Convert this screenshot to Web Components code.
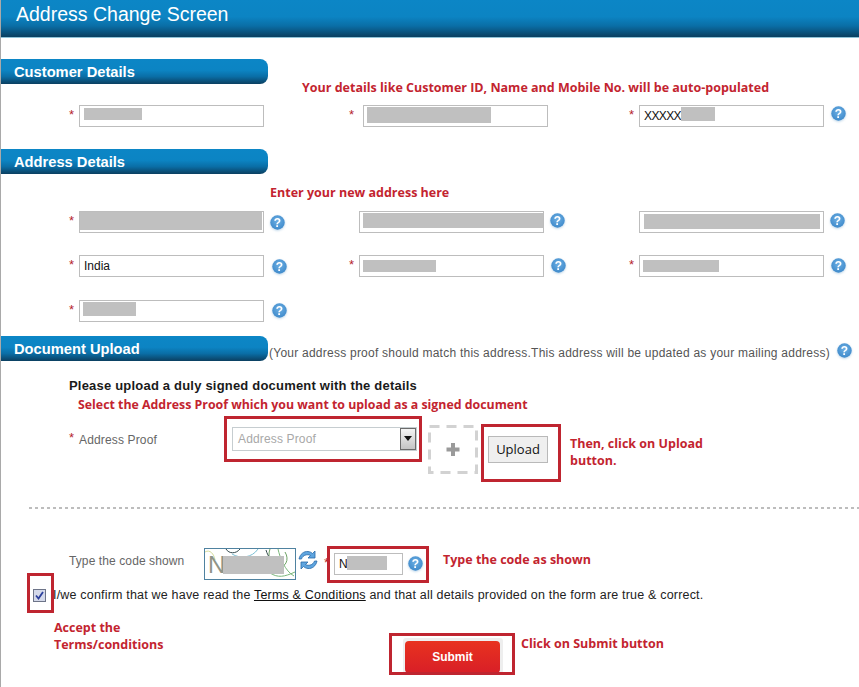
<!DOCTYPE html>
<html lang="en">
<head>
<meta charset="utf-8">
<title>Address Change Screen</title>
<style>
    html, body { margin: 0; padding: 0; background: #fff; }
    body { font-family: "Liberation Sans", Arial, sans-serif; }
</style>
</head>
<body>
<address-page></address-page>

<script>
(function () {
    const BAR = "linear-gradient(to bottom, #0c86c6 0%, #0c84c3 45%, #0a6ea6 70%, #0b3f60 100%)";

    class BaseElement extends HTMLElement {
        constructor() {
            super();
            this.attachShadow({ mode: "open" });
        }

        connectedCallback() {
            this.shadowRoot.innerHTML = this.render();
        }
    }

    class TitleBar extends BaseElement {
        render() {
            return `
                <style>
                    :host {
                        display: flex;
                        align-items: center;
                        height: 28px;
                        padding: 0 0 9px 15px;
                        background: ${BAR};
                        border-bottom: 1px solid #8fc3d8;
                        color: #fff;
                        font-size: 19.5px;
                    }
                </style>
                <slot></slot>
            `;
        }
    }

    class SectionHead extends BaseElement {
        render() {
            return `
                <style>
                    :host {
                        display: flex;
                        align-items: center;
                        width: 254px;
                        height: 25px;
                        padding-left: 13px;
                        background: ${BAR};
                        border-radius: 0 8px 8px 0;
                        color: #fff;
                        font-size: 14.7px;
                        font-weight: bold;
                        flex: none;
                    }
                </style>
                <slot></slot>
            `;
        }
    }

    class HelpIcon extends BaseElement {
        render() {
            return `
                <style>
                    :host { display: inline-block; width: 15px; height: 15px; flex: none; }
                    svg { display: block; overflow: visible; filter: drop-shadow(0 1px 1px rgba(120, 170, 210, .5)); }
                    text { font: bold 12px "Liberation Sans", Arial, sans-serif; fill: #fff; }
                </style>
                <svg width="15" height="15" viewBox="0 0 15 15">
                    <defs>
                        <radialGradient id="g" cx="50%" cy="40%" r="60%">
                            <stop offset="0" stop-color="#6db0e4"/>
                            <stop offset="1" stop-color="#3f8acb"/>
                        </radialGradient>
                    </defs>
                    <circle cx="7.5" cy="7.5" r="7.2" fill="url(#g)"/>
                    <text x="7.5" y="11.8" text-anchor="middle">?</text>
                </svg>
            `;
        }
    }

    class RedNote extends BaseElement {
        render() {
            return `
                <style>
                    :host {
                        display: block;
                        color: #c3242f;
                        font-family: "Open Sans", sans-serif;
                        font-size: 12.5px;
                        font-weight: 700;
                        line-height: 17.5px;
                    }
                </style>
                <slot></slot>
            `;
        }
    }

    class TextField extends BaseElement {
        render() {
            const width = this.getAttribute("width") || "185";
            const value = this.getAttribute("value") || "";
            const maskX = this.getAttribute("mask-x") || "4";
            const maskW = this.getAttribute("mask-w") || "0";
            const maskY = this.getAttribute("mask-y") || "3";
            const maskH = this.getAttribute("mask-h") || "14";
            const gap = this.getAttribute("help-gap");
            const dy = this.getAttribute("help-dy") || "0";
            const starW = this.getAttribute("star-w") || "10";
            const spacing = this.getAttribute("spacing") || "0";
            const star = this.hasAttribute("no-star") ? "" : "*";
            return `
                <style>
                    :host { display: flex; align-items: flex-start; font-size: 12px; }
                    .star { width: ${starW}px; flex: none; color: #b5242c; font-size: 13px; line-height: 20px; }
                    .box {
                        position: relative;
                        box-sizing: border-box;
                        width: ${width}px;
                        height: 22px;
                        border: 1px solid #bdbdbd;
                        background: #fff;
                        padding-left: 4px;
                        line-height: 20px;
                        letter-spacing: ${spacing}px;
                        color: #111;
                        overflow: hidden;
                    }
                    .mask {
                        position: absolute;
                        left: ${maskX}px;
                        top: ${maskY}px;
                        width: ${maskW}px;
                        height: ${maskH}px;
                        background: #c0c0c0;
                    }
                    help-icon { margin-left: ${gap}px; margin-top: ${dy}px; }
                </style>
                <span class="star">${star}</span>
                <div class="box">${value}<span class="mask"></span></div>
                ${gap !== null ? "<help-icon></help-icon>" : ""}
            `;
        }
    }

    class FieldRow extends BaseElement {
        render() {
            return `
                <style>
                    :host {
                        display: grid;
                        grid-template-columns: 280px 280px auto;
                        padding-left: 68px;
                    }
                </style>
                <slot></slot>
            `;
        }
    }

    // red rectangles the screenshot's author drew round the controls
    class MarkBox extends BaseElement {
        render() {
            return `
                <style>
                    :host {
                        position: absolute;
                        box-sizing: border-box;
                        border: 3px solid #bf2530;
                        pointer-events: none;
                    }
                </style>
            `;
        }
    }

    class SelectBox extends BaseElement {
        render() {
            return `
                <style>
                    :host {
                        display: flex;
                        box-sizing: border-box;
                        width: 185px;
                        height: 24px;
                        border: 1px solid #c6cdd0;
                        color: #a8a8a8;
                        font-size: 12px;
                        letter-spacing: .15px;
                        line-height: 22px;
                        padding-left: 5px;
                        justify-content: space-between;
                    }
                    .arrow {
                        box-sizing: border-box;
                        width: 16px;
                        height: 22px;
                        background: linear-gradient(#f4f4f4, #c4c4c4);
                        border: 1px solid #6b6b6b;
                        display: flex;
                        align-items: center;
                        justify-content: center;
                    }
                    .arrow::before {
                        content: "";
                        border: 4px solid transparent;
                        border-top: 5px solid #111;
                        border-bottom: 0;
                    }
                </style>
                <slot></slot>
                <span class="arrow"></span>
            `;
        }
    }

    class AddBox extends BaseElement {
        render() {
            return `
                <style>
                    :host { display: block; width: 50px; height: 49px; flex: none; }
                    svg { display: block; }
                </style>
                <svg width="50" height="49" viewBox="0 0 50 49">
                    <rect x="1.5" y="1.5" width="47" height="46" fill="none" stroke="#d2d2d2" stroke-width="3" stroke-dasharray="10 7"/>
                    <path d="M25 18v13M18.500 24.500h13" stroke="#9a9a9a" stroke-width="4" fill="none"/>
                </svg>
            `;
        }
    }

    class UploadButton extends BaseElement {
        render() {
            return `
                <style>
                    :host {
                        display: flex;
                        align-items: center;
                        justify-content: center;
                        box-sizing: border-box;
                        width: 60px;
                        height: 27px;
                        background: #efefef;
                        border: 1px solid #b9b9b9;
                        color: #111;
                        font-family: "Open Sans", sans-serif;
                        font-size: 13px;
                    }
                </style>
                <slot></slot>
            `;
        }
    }

    class CaptchaImage extends BaseElement {
        render() {
            return `
                <style>
                    :host { display: block; width: 92px; height: 32px; flex: none; }
                    svg { display: block; }
                    text { font: 24px "Liberation Sans", Arial, sans-serif; fill: #8f9488; }
                </style>
                <svg width="92" height="32" viewBox="0 0 92 32">
                    <rect x=".5" y=".5" width="91" height="31" fill="#fff" stroke="#4f82a0"/>
                    <path d="M1 4c5-3 9 2 10 8" fill="none" stroke="#d6dc9a"/>
                    <path d="M22 1c3 5 10 5 14 0" fill="none" stroke="#354a4e"/>
                    <path d="M28 6c8 5 20 4 26-5" fill="none" stroke="#7cc0d4"/>
                    <path d="M66 1c-3 8 1 17 8 18s12-7 7-15" fill="none" stroke="#6fa366"/>
                    <path d="M62 2c2 7 6 12 12 15" fill="none" stroke="#354a4e"/>
                    <path d="M74 1c2 9 7 22 16 27" fill="none" stroke="#7ab77a"/>
                    <path d="M66 25c8 5 14 4 25-1" fill="none" stroke="#7ab77a"/>
                    <text x="4" y="25">N</text>
                    <rect x="19" y="8" width="61" height="18" fill="#c0c0c0"/>
                </svg>
            `;
        }
    }

    class RefreshIcon extends BaseElement {
        render() {
            return `
                <style>
                    :host { display: block; width: 20px; height: 20px; flex: none; }
                    svg { display: block; }
                </style>
                <svg width="20" height="20" viewBox="0 0 20 20">
                    <path d="M1 9C2 4 6 1 10 1.500c2 .2 3.500 1 4.500 2L17 1v7h-7l2.500-2.500C11 4.300 7 4.300 5 6.500 4 7.500 3.800 8.300 3.500 9Z" fill="#5fa5df" stroke="#2a6aa8" stroke-width=".8"/>
                    <path d="M19 11c-1 5-5 8-9 7.500-2-.2-3.500-1-4.500-2L3 19v-7h7l-2.500 2.500c1.500 1.200 5.500 1.200 7.500-1 1-1 1.200-1.800 1.500-2.500Z" fill="#5fa5df" stroke="#2a6aa8" stroke-width=".8"/>
                </svg>
            `;
        }
    }

    class TickBox extends BaseElement {
        render() {
            return `
                <style>
                    :host { display: block; width: 13px; height: 13px; flex: none; }
                    svg { display: block; }
                </style>
                <svg width="13" height="13" viewBox="0 0 13 13">
                    <rect x=".5" y=".5" width="12" height="12" fill="#d4d9ea" stroke="#6d7488"/>
                    <path d="M3 6.500l2.500 3L10 3" fill="none" stroke="#2b3f9c" stroke-width="1.800"/>
                </svg>
            `;
        }
    }

    class SubmitButton extends BaseElement {
        render() {
            return `
                <style>
                    :host {
                        display: block;
                        width: 100px;
                        height: 36px;
                        box-sizing: border-box;
                        padding: 3px 3px 1px 2px;
                        background: #eeeeee;
                        border-radius: 3px;
                    }
                    div {
                        display: flex;
                        align-items: center;
                        justify-content: center;
                        height: 32px;
                        border-radius: 4px;
                        background: linear-gradient(#e8321f, #d81f27);
                        color: #fff;
                        font-size: 12px;
                        font-weight: bold;
                    }
                </style>
                <div><slot></slot></div>
            `;
        }
    }

    class AddressPage extends BaseElement {
        render() {
            return `
                <style>
                    :host {
                        display: block;
                        position: relative;
                        box-sizing: border-box;
                        width: 859px;
                        height: 687px;
                        overflow: hidden;
                        border-left: 1px solid #a9a9a9;
                        color: #111;
                        font-family: "Liberation Sans", Arial, sans-serif;
                    }
                    section-head { margin-top: 21px; }
                    .address-head { margin-top: 22px; }
                    .hint { margin-left: 301px; margin-top: -5px; height: 14px; }
                    .row-customer { margin-top: 12px; }
                    .hint-address { margin: 10px 0 0 269px; height: 18px; }
                    .row-a { margin-top: 9px; }
                    .row-b { margin-top: 22px; }
                    .row-c { margin-top: 23px; }
                    .doc-head { display: flex; align-items: flex-end; margin-top: 14px; }
                    .doc-head section-head { margin-top: 0; }
                    .doc-note {
                        color: #555;
                        font-size: 12px;
                        margin-left: 1px;
                        margin-bottom: 1px;
                        letter-spacing: .24px;
                        white-space: nowrap;
                    }
                    .doc-head help-icon { margin: 0 0 3px 7px; }
                    .doc-title {
                        margin: 17px 0 0 68px;
                        font-size: 13px;
                        letter-spacing: .2px;
                        font-weight: bold;
                        line-height: 15px;
                        color: #1a1a1a;
                    }
                    .doc-hint { margin: 3px 0 0 77px; font-size: 12.35px; }
                    .upload-row { display: flex; align-items: flex-start; margin: 6px 0 0 68px; }
                    .star { width: 10px; color: #b5242c; font-size: 13px; line-height: 20px; flex: none; margin-top: 8px; }
                    .upload-label { width: 153px; color: #666; font-size: 12px; letter-spacing: .15px; line-height: 26px; margin-top: 7px; flex: none; }
                    .upload-row select-box { margin-top: 7px; }
                    .upload-row add-box { margin: 5px 0 0 11px; }
                    .upload-row upload-button { margin: 16px 0 0 10px; }
                    .upload-row red-note { margin: 15px 0 0 22px; }
                    .rule {
                        height: 2px;
                        margin: 33px 0 0 28px;
                        background: repeating-linear-gradient(to right, #bdbdbd 0 3px, #fff 3px 6px);
                    }
                    .code-row { display: flex; align-items: flex-start; margin: 39px 0 0 68px; }
                    .code-label { width: 135px; color: #666; font-size: 12px; line-height: 26px; flex: none; letter-spacing: .1px; }
                    .code-row refresh-icon { margin: 2px 0 0 2px; }
                    .code-row text-field { margin: 5px 0 0 6px; }
                    .code-row red-note { margin: 3px 0 0 20px; }
                    .confirm { display: flex; align-items: center; margin: 8px 0 0 32px; height: 15px; font-size: 12.5px; letter-spacing: .19px; color: #222; white-space: nowrap; }
                    .confirm span { margin-left: 7px; }
                    .confirm u { color: #111; }
                    .accept { margin: 16px 0 0 53px; }
                    .submit-row { display: flex; align-items: flex-start; margin: -16px 0 0 402px; }
                    .submit-row red-note { margin: -3px 0 0 18px; }
                    .m-select { left: 223px; top: 416px; width: 198px; height: 46px; }
                    .m-upload { left: 480px; top: 424px; width: 80px; height: 58px; }
                    .m-code { left: 326px; top: 546px; width: 102px; height: 37px; }
                    .m-tick { left: 26px; top: 573px; width: 27px; height: 40px; }
                    .m-submit { left: 388px; top: 633px; width: 126px; height: 42px; }
                </style>
                <title-bar>Address Change Screen</title-bar>

                <section-head>Customer Details</section-head>
                <red-note class="hint">Your details like Customer ID, Name and Mobile No. will be auto-populated</red-note>
                <field-row class="row-customer">
                    <text-field mask-x="4" mask-y="2" mask-w="58" mask-h="12"></text-field>
                    <text-field star-w="14" mask-x="3" mask-y="1" mask-w="124" mask-h="16"></text-field>
                    <text-field value="XXXXX" spacing="-.6" mask-x="41" mask-y="1" mask-w="34" help-gap="7" help-dy="1"></text-field>
                </field-row>

                <section-head class="address-head">Address Details</section-head>
                <red-note class="hint-address">Enter your new address here</red-note>
                <field-row class="row-a">
                    <text-field mask-x="0" mask-y="0" mask-w="182" mask-h="18" help-gap="6" help-dy="4"></text-field>
                    <text-field no-star mask-x="3" mask-y="1" mask-w="180" mask-h="15" help-gap="6" help-dy="2"></text-field>
                    <text-field no-star mask-x="4" mask-y="2" mask-w="176" mask-h="15" help-gap="6" help-dy="2"></text-field>
                </field-row>
                <field-row class="row-b">
                    <text-field value="India" help-gap="8" help-dy="4"></text-field>
                    <text-field mask-x="3" mask-y="4" mask-h="12" mask-w="73" help-gap="7" help-dy="3"></text-field>
                    <text-field mask-x="3" mask-y="4" mask-h="12" mask-w="76" help-gap="7" help-dy="3"></text-field>
                </field-row>
                <field-row class="row-c">
                    <text-field mask-x="3" mask-y="1" mask-w="53" help-gap="8" help-dy="3"></text-field>
                </field-row>

                <div class="doc-head">
                    <section-head>Document Upload</section-head>
                    <span class="doc-note">(Your address proof should match this address.This address will be updated as your mailing address)</span>
                    <help-icon></help-icon>
                </div>
                <div class="doc-title">Please upload a duly signed document with the details</div>
                <red-note class="doc-hint">Select the Address Proof which you want to upload as a signed document</red-note>
                <div class="upload-row">
                    <span class="star">*</span>
                    <span class="upload-label">Address Proof</span>
                    <select-box>Address Proof</select-box>
                    <add-box></add-box>
                    <upload-button>Upload</upload-button>
                    <red-note>Then, click on Upload<br>button.</red-note>
                </div>
                <div class="rule"></div>

                <div class="code-row">
                    <span class="code-label">Type the code shown</span>
                    <captcha-image></captcha-image>
                    <refresh-icon></refresh-icon>
                    <text-field width="69" value="N" mask-x="12" mask-y="2" mask-w="40" mask-h="14" help-gap="5" help-dy="3"></text-field>
                    <red-note>Type the code as shown</red-note>
                </div>
                <div class="confirm">
                    <tick-box></tick-box>
                    <span>I/we confirm that we have read the <u>Terms &amp; Conditions</u> and that all details provided on the form are true &amp; correct.</span>
                </div>
                <red-note class="accept">Accept the<br>Terms/conditions</red-note>
                <div class="submit-row">
                    <submit-button>Submit</submit-button>
                    <red-note>Click on Submit button</red-note>
                </div>

                <mark-box class="m-select"></mark-box>
                <mark-box class="m-upload"></mark-box>
                <mark-box class="m-code"></mark-box>
                <mark-box class="m-tick"></mark-box>
                <mark-box class="m-submit"></mark-box>
            `;
        }
    }

    customElements.define("title-bar", TitleBar);
    customElements.define("section-head", SectionHead);
    customElements.define("help-icon", HelpIcon);
    customElements.define("red-note", RedNote);
    customElements.define("text-field", TextField);
    customElements.define("field-row", FieldRow);
    customElements.define("mark-box", MarkBox);
    customElements.define("select-box", SelectBox);
    customElements.define("add-box", AddBox);
    customElements.define("upload-button", UploadButton);
    customElements.define("captcha-image", CaptchaImage);
    customElements.define("refresh-icon", RefreshIcon);
    customElements.define("tick-box", TickBox);
    customElements.define("submit-button", SubmitButton);
    customElements.define("address-page", AddressPage);
})();
</script>
</body>
</html>
